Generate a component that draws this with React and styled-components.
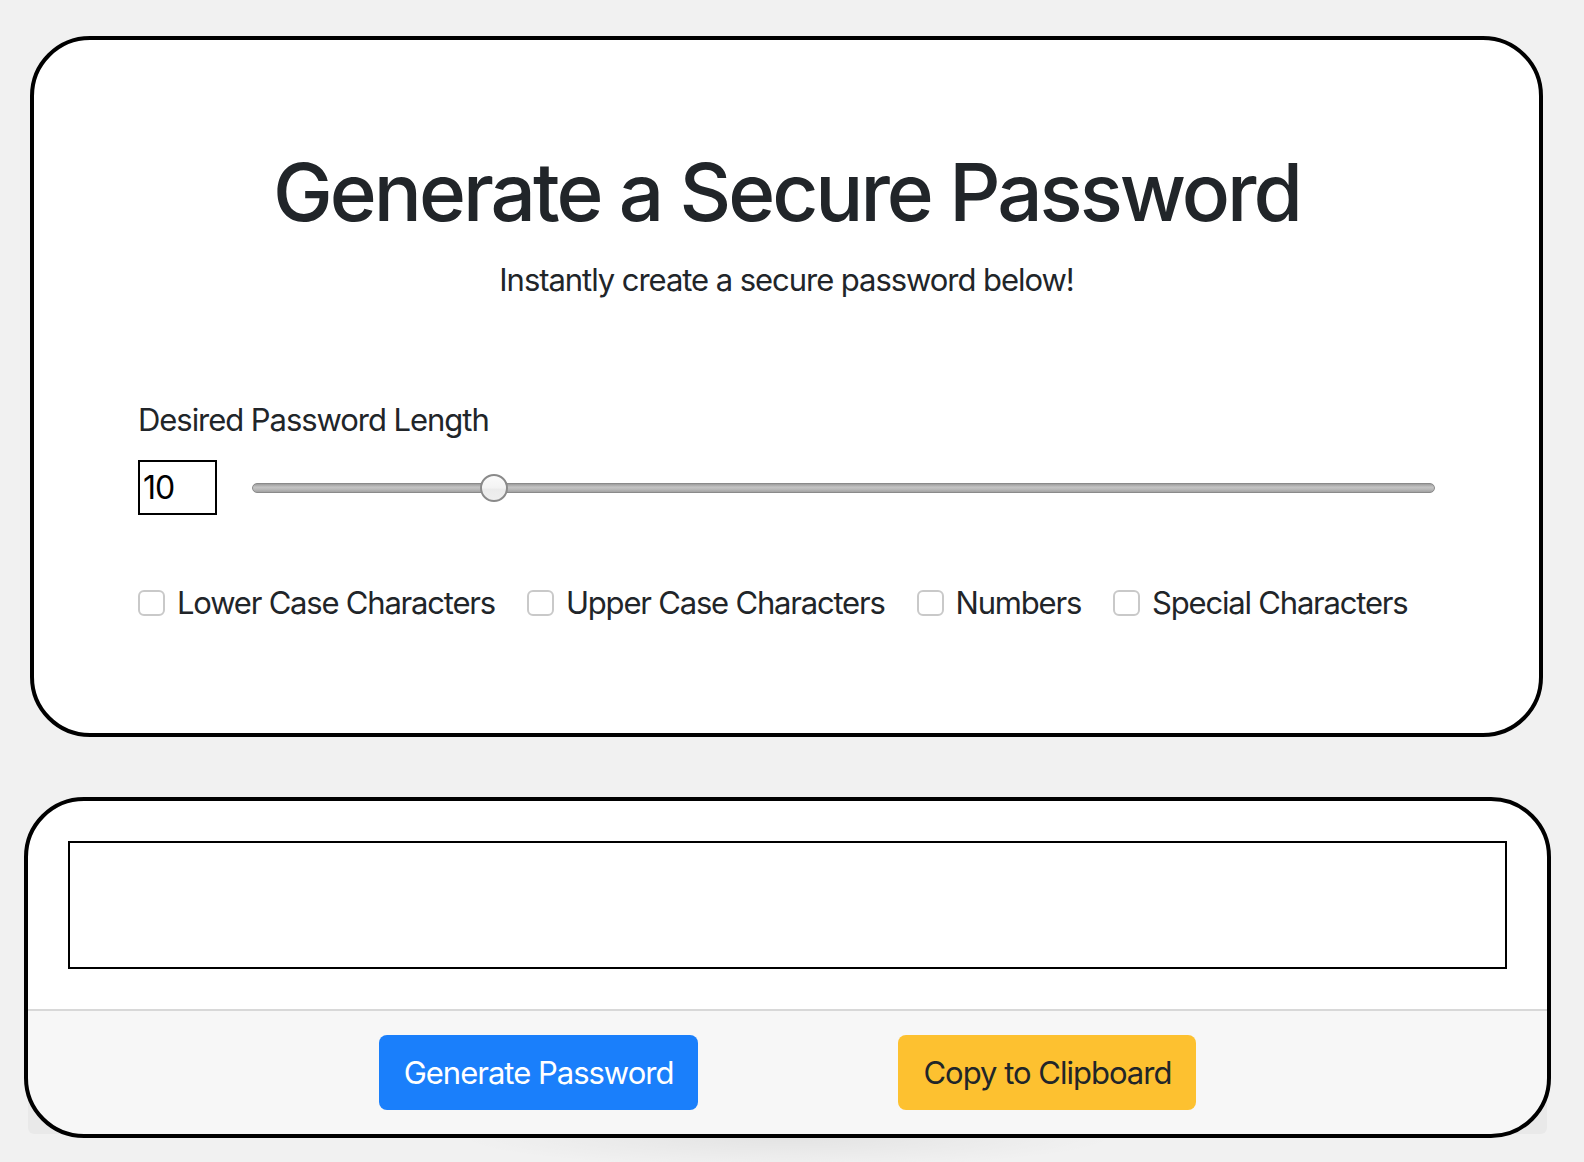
import React, { useState } from "react";
import styled, { createGlobalStyle } from "styled-components";

const GlobalStyle = createGlobalStyle`
  html, body { margin: 0; padding: 0; }
  body {
    background: #f1f1f1;
    font-family: Inter, "Noto Sans", "Liberation Sans", sans-serif;
    color: #212529;
  }
  * { box-sizing: border-box; }
`;

const Page = styled.main`
  display: flex;
  flex-direction: column;
  padding-top: 36px;
  min-height: 1162px;
`;

const SettingsCard = styled.section`
  margin: 0 41px 0 30px;
  background: #fff;
  border: 4px solid #000;
  border-radius: 60px;
  padding: 104px 104px 106px;
`;

const Title = styled.h1`
  margin: 0 0 16px;
  font-size: 80px;
  line-height: 96px;
  font-weight: 500;
  text-align: center;
  letter-spacing: -3px;
`;

const Subtitle = styled.p`
  margin: 0;
  font-size: 31px;
  line-height: 48px;
  text-align: center;
  letter-spacing: -1.05px;
`;

const FieldLabel = styled.label`
  display: block;
  margin: 92px 0 16px;
  font-size: 31px;
  line-height: 48px;
  letter-spacing: -1.05px;
`;

const LengthRow = styled.div`
  display: flex;
  align-items: center;
  gap: 35px;
  height: 55px;
`;

const LengthInput = styled.input`
  width: 79px;
  height: 55px;
  margin: 0;
  padding: 0 0 0 3px;
  border: 2px solid #000;
  border-radius: 0;
  font-family: inherit;
  font-size: 32px;
  letter-spacing: -1px;
  color: #000;
  background: #fff;
  outline: none;
`;

const Slider = styled.input`
  flex: 1;
  margin: 0;
  height: 30px;
  background: transparent;
  -webkit-appearance: none;
  appearance: none;
  outline: none;

  &::-webkit-slider-runnable-track {
    height: 10px;
    border-radius: 5px;
    border: 1px solid #8a8a8a;
    background: linear-gradient(#9c9c9c, #c4c4c4 40%, #bababa 65%, #a2a2a2);
  }
  &::-webkit-slider-thumb {
    -webkit-appearance: none;
    appearance: none;
    width: 28px;
    height: 28px;
    margin-top: -10px;
    border-radius: 50%;
    border: 2px solid #8a8a8a;
    background: linear-gradient(#fbfbfb, #f3f3f3 50%, #ebebeb 55%, #efefef);
  }
`;

const OptionsRow = styled.div`
  display: flex;
  align-items: center;
  gap: 32px;
  margin-top: 64px;
  height: 48px;
`;

const Option = styled.label`
  display: flex;
  align-items: center;
  font-size: 31px;
  line-height: 48px;
  letter-spacing: -1.2px;
  white-space: nowrap;
`;

const Check = styled.input`
  -webkit-appearance: none;
  appearance: none;
  width: 27px;
  height: 26px;
  margin: 0 12px 0 0;
  border: 2px solid #c9c9c9;
  border-radius: 6px;
  background: #fff;
  flex-shrink: 0;
`;

const OutputCard = styled.section`
  position: relative;
  margin: 60px 33px 0 24px;
  background: #fff;
  border: 4px solid #000;
  border-radius: 60px;

  &::after {
    content: "";
    position: absolute;
    left: 28%;
    right: 28%;
    bottom: -34px;
    height: 32px;
    background: radial-gradient(ellipse at top, rgba(0, 0, 0, 0.06), rgba(0, 0, 0, 0) 70%);
    pointer-events: none;
  }
`;

const OutputBody = styled.div`
  padding: 40px;
`;

const Output = styled.textarea`
  display: block;
  width: 100%;
  height: 128px;
  margin: 0;
  border: 2px solid #000;
  border-radius: 0;
  resize: none;
  font-family: inherit;
  font-size: 31px;
  background: #fff;
  outline: none;
`;

const Footer = styled.div`
  display: flex;
  justify-content: center;
  gap: 200px;
  padding: 24px 0;
  background: rgba(0, 0, 0, 0.03);
  border-top: 2px solid rgba(0, 0, 0, 0.125);
  border-radius: 0 0 6px 6px;
`;

const Button = styled.button`
  height: 75px;
  padding: 0 25px;
  border: none;
  border-radius: 8px;
  font-family: inherit;
  font-size: 31px;
  line-height: 48px;
  font-weight: 400;
  letter-spacing: -1px;
  cursor: pointer;
  background: ${(p) => (p.$variant === "warning" ? "#fdc130" : "#1a7ffb")};
  color: ${(p) => (p.$variant === "warning" ? "#212529" : "#fff")};
`;

const options = [
  "Lower Case Characters",
  "Upper Case Characters",
  "Numbers",
  "Special Characters",
];

export default function App() {
  const [length, setLength] = useState(10);
  return (
    <>
      <GlobalStyle />
      <Page>
        <SettingsCard>
          <Title>Generate a Secure Password</Title>
          <Subtitle>Instantly create a secure password below!</Subtitle>
          <FieldLabel htmlFor="len">Desired Password Length</FieldLabel>
          <LengthRow>
            <LengthInput
              id="len"
              type="text"
              value={length}
              onChange={(e) => setLength(e.target.value)}
            />
            <Slider
              type="range"
              min={5}
              max={30.4}
              step={0.1}
              value={length}
              onChange={(e) => setLength(Number(e.target.value))}
            />
          </LengthRow>
          <OptionsRow>
            {options.map((o) => (
              <Option key={o}>
                <Check type="checkbox" />
                {o}
              </Option>
            ))}
          </OptionsRow>
        </SettingsCard>
        <OutputCard>
          <OutputBody>
            <Output readOnly />
          </OutputBody>
          <Footer>
            <Button $variant="primary">Generate Password</Button>
            <Button $variant="warning">Copy to Clipboard</Button>
          </Footer>
        </OutputCard>
      </Page>
    </>
  );
}
